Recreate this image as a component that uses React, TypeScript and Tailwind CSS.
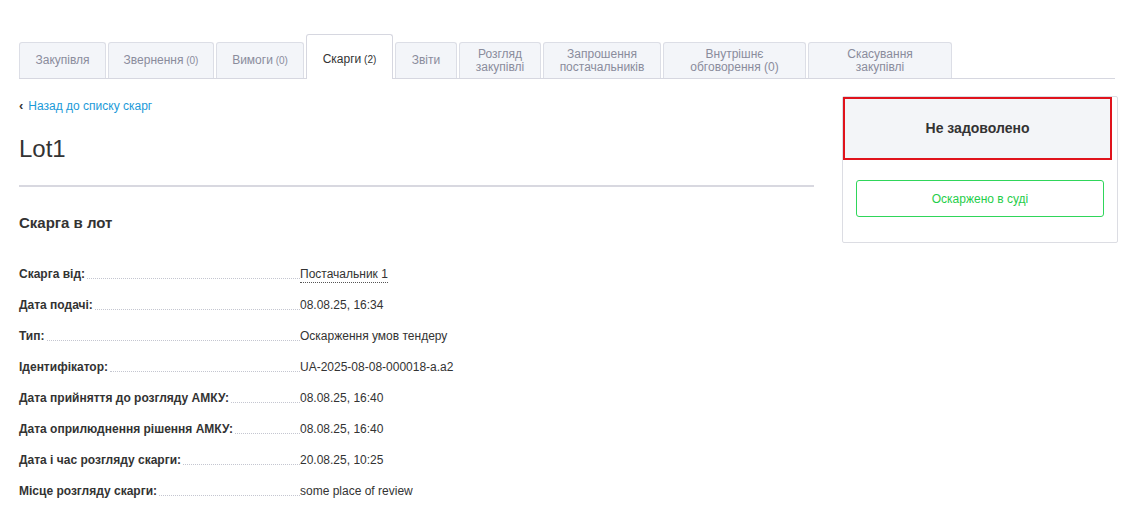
const TABS: { label: string; count?: string; w: string; active?: boolean }[] = [
  { label: 'Закупівля', w: 'w-[87px]' },
  { label: 'Звернення', count: '(0)', w: 'w-[106px]' },
  { label: 'Вимоги', count: '(0)', w: 'w-[88px]' },
  { label: 'Скарги', count: '(2)', w: 'w-[87px]', active: true },
  { label: 'Звіти', w: 'w-[62px]' },
  { label: 'Розгляд\nзакупівлі', w: 'w-[82px]' },
  { label: 'Запрошення\nпостачальників', w: 'w-[118px]' },
  { label: 'Внутрішнє\nобговорення (0)', w: 'w-[143px]' },
  { label: 'Скасування\nзакупівлі', w: 'w-[144px]' },
];

const ROWS: { label: string; value: string; underline?: boolean }[] = [
  { label: 'Скарга від:', value: 'Постачальник 1', underline: true },
  { label: 'Дата подачі:', value: '08.08.25, 16:34' },
  { label: 'Тип:', value: 'Оскарження умов тендеру' },
  { label: 'Ідентифікатор:', value: 'UA-2025-08-08-000018-a.a2' },
  { label: 'Дата прийняття до розгляду АМКУ:', value: '08.08.25, 16:40' },
  { label: 'Дата оприлюднення рішення АМКУ:', value: '08.08.25, 16:40' },
  { label: 'Дата і час розгляду скарги:', value: '20.08.25, 10:25' },
  { label: 'Місце розгляду скарги:', value: 'some place of review' },
];

export default function App() {
  return (
    <div className="min-h-[528px] bg-white font-['Liberation_Sans',Arial,sans-serif] text-[#333]">
      {/* вкладки */}
      <div className="px-[19px] pt-[34px]">
        <div className="flex items-end gap-[2px] border-b border-[#d6d7e0] w-[1096px]">
          {TABS.map((t) => (
            <div
              key={t.label}
              className={`${t.w} shrink-0 whitespace-pre-line rounded-t-[3px] border border-b-0 text-center text-[12px] leading-[13px] ${
                t.active
                  ? 'relative -mb-px h-[45px] border-[#d6d7e0] bg-white pt-[7px] text-[#333]'
                  : 'h-[36px] border-[#dcdee6] bg-[#f3f5f9] text-[#8a8c9c]'
              }`}
            >
              <div className="flex h-[35px] items-center justify-center">
                <span>
                  {t.label}
                  {t.count && <span className="text-[10px]"> {t.count}</span>}
                </span>
              </div>
            </div>
          ))}
        </div>
      </div>

      <div className="flex gap-[28px] pl-[19px] pr-[13px] pt-[17px]">
        {/* основна колонка */}
        <div className="w-[795px] shrink-0">
          <a className="flex items-center gap-[5px] text-[12px] text-[#1b9ad8]">
            <span className="text-[13px] font-bold text-[#333]">‹</span>
            Назад до списку скарг
          </a>
          <h1 className="mt-[18px] text-[24px] leading-[30px] text-[#333]">Lot1</h1>
          <div className="mt-[21px] h-[2px] bg-[#d8d8e0]" />
          <h2 className="mt-[26px] text-[15px] font-bold leading-[20px]">Скарга в лот</h2>

          <div className="mt-[34px] w-[560px]">
            {ROWS.map((r) => (
              <div key={r.label} className="flex h-[31px] items-start text-[12px] leading-[15px]">
                <div className="flex w-[281px] shrink-0 items-end">
                  <span className="font-bold text-[#333]">{r.label}</span>
                  <span className="mb-[3px] ml-[2px] flex-1 border-b border-dotted border-[#c4c6d0]" />
                </div>
                <span
                  className={`${
                    r.underline ? 'border-b border-dotted border-[#555]' : ''
                  } text-[#333]`}
                >
                  {r.value}
                </span>
              </div>
            ))}
          </div>
        </div>

        {/* бокова панель */}
        <div className="w-[276px] shrink-0 self-start rounded-[2px] border border-[#dcdde3]">
          <div className="flex h-[63px] w-[269px] items-center justify-center border-2 border-[#e0131c] bg-[#f3f5f8] text-[14px] font-bold text-[#333]">
            Не задоволено
          </div>
          <div className="px-[13px] pb-[25px] pt-[20px]">
            <button className="flex h-[37px] w-full items-center justify-center rounded-[3px] border border-[#2fd65a] text-[12px] text-[#1fce4a]">
              Оскаржено в суді
            </button>
          </div>
        </div>
      </div>
    </div>
  );
}
